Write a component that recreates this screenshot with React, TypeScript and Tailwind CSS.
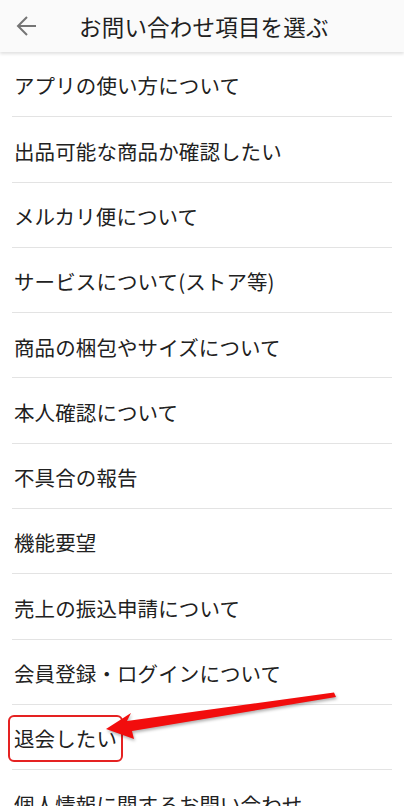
const items = [
  'アプリの使い方について',
  '出品可能な商品か確認したい',
  'メルカリ便について',
  'サービスについて(ストア等)',
  '商品の梱包やサイズについて',
  '本人確認について',
  '不具合の報告',
  '機能要望',
  '売上の振込申請について',
  '会員登録・ログインについて',
  '退会したい',
  '個人情報に関するお問い合わせ',
]

export default function App() {
  return (
    <div
      className="relative h-[806px] w-full overflow-hidden bg-white text-[#212121]"
      style={{ fontFamily: '"Noto Sans CJK JP", "Noto Sans", sans-serif' }}
    >
      {/* header */}
      <div className="relative z-10 flex h-[52px] items-center bg-[#fafafa] shadow-[0_2px_3px_rgba(0,0,0,0.12)]">
        <svg width="40" height="44" viewBox="0 0 40 44" className="ml-[4px] shrink-0" fill="none" stroke="#757575" strokeWidth="2">
          <path d="M14 22h18M23 13l-9 9 9 9" />
        </svg>
        <h1 className="ml-[35px] text-[22.5px] leading-none tracking-[0.2px] text-[#212121]">
          お問い合わせ項目を選ぶ
        </h1>
      </div>

      {/* list */}
      <ul>
        {items.map((label, i) => (
          <li key={label} className="relative mx-[12px] flex h-[65.3px] items-center border-b border-[#e3e3e3]">
            <span className="ml-[2px] mt-[3px] text-[20.5px] leading-none tracking-[0.1px]">{label}</span>
            {i === 10 && (
              <div className="absolute left-[-4px] top-[10px] h-[47px] w-[115px] rounded-[6px] border-2 border-[#e52222]" />
            )}
          </li>
        ))}
      </ul>

      {/* annotation arrow */}
      <svg
        className="pointer-events-none absolute left-0 top-0"
        width="404"
        height="806"
        viewBox="0 0 404 806"
        style={{ filter: 'drop-shadow(1px 2px 1.5px rgba(0,0,0,0.3))' }}
      >
        <polygon
          points="106,729 131,713 127,721 334,692.5 336,697 132,731 134,739"
          fill="#f20d0d"
        />
      </svg>
    </div>
  )
}
